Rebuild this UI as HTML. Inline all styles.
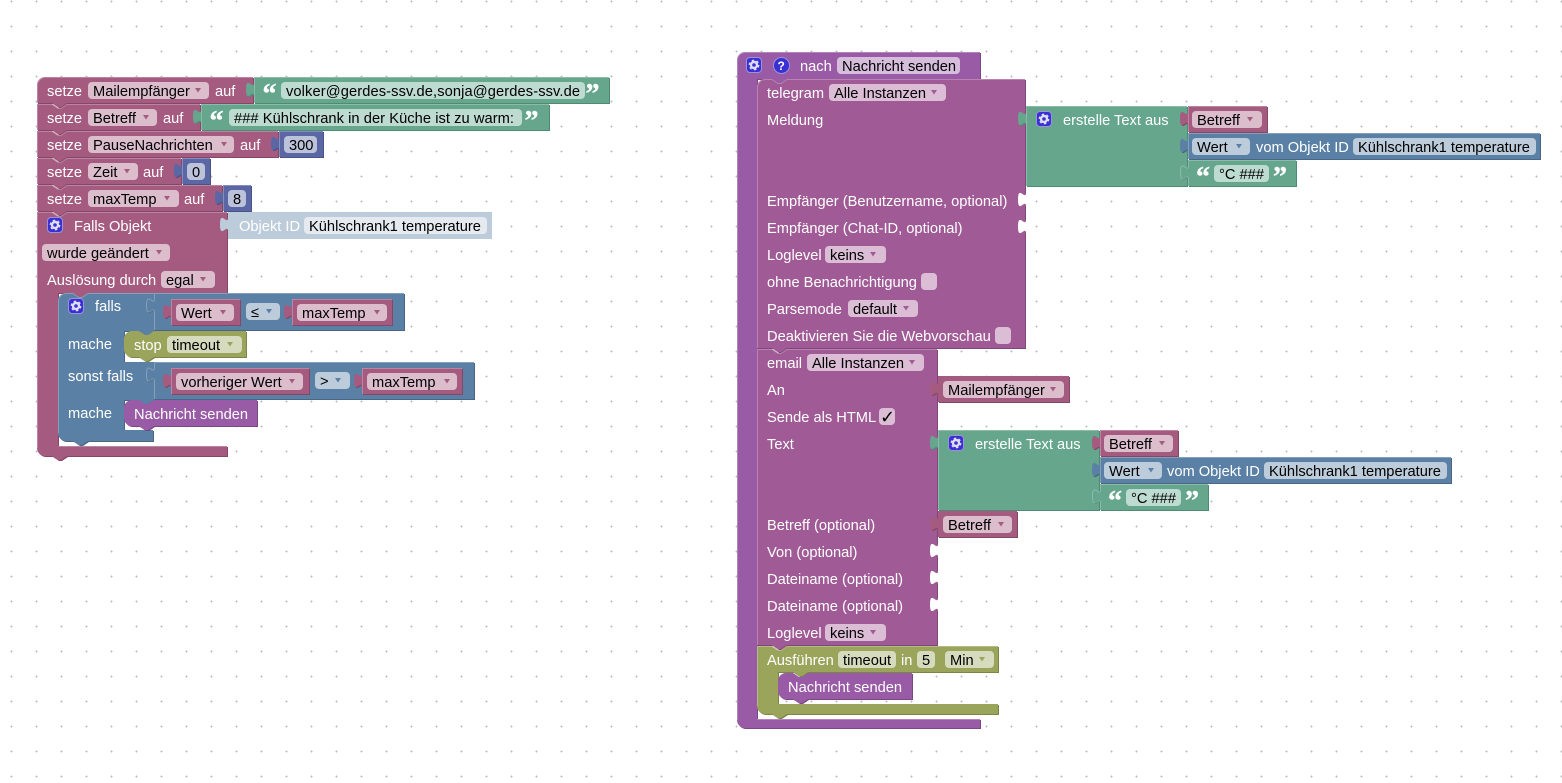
<!DOCTYPE html>
<html><head><meta charset="utf-8"><title>Blockly</title>
<style>
html,body{margin:0;padding:0;background:#fff;width:1562px;height:783px;overflow:hidden}
svg{display:block;position:absolute;left:0;top:0}
text{font-family:"Liberation Sans",sans-serif;font-size:14.67px;fill:#fff;white-space:pre}
text.k{fill:#000}
text.q{font-family:"Liberation Serif",serif;font-weight:bold;font-size:28px;stroke:#fff;stroke-width:.4}
.mv{fill:#A55B80;filter:drop-shadow(1px 1px 0 #844866)}
.gr{fill:#65A68D;filter:drop-shadow(1px 1px 0 #4F8A74)}
.bl{fill:#5B80A5;filter:drop-shadow(1px 1px 0 #496684)}
.ma{fill:#5B67A5;filter:drop-shadow(1px 1px 0 #495284)}
.ol{fill:#9AA55B;filter:drop-shadow(1px 1px 0 #7B8449)}
.pu{fill:#995BA5;filter:drop-shadow(1px 1px 0 #7A4984)}
.tg{fill:#A05A96;filter:drop-shadow(1px 1px 0 #804878)}
.ob{fill:#BDCCDB}
.fm{fill:#DBBDCC}.fg{fill:#BDDBD1}.fb{fill:#BDCCDB}.fa{fill:#BDC2DB}.fo{fill:#D6DBBD}.fp{fill:#D6BDDB}.ft{fill:#DBBDD6}.fi{fill:#E4EAF0}
.h{fill:none;stroke:#fff;stroke-opacity:.25;stroke-width:1}
.w{fill:#fff}
</style></head><body>
<svg width="1562" height="783" viewBox="0 0 1562 783" xmlns="http://www.w3.org/2000/svg">
<defs>
<pattern id="dots" x="0" y="0" width="25" height="25" patternUnits="userSpaceOnUse">
<rect x="10" y="1" width="3" height="1" fill="#dcdcdc"/>
<rect x="11" y="0" width="1" height="3" fill="#dcdcdc"/>
<rect x="11" y="1" width="1" height="1" fill="#bbb"/>
</pattern>
<path id="a" d="M-3 0h6l-3 4.500z"/>
<g id="g">
<rect x=".5" y=".5" width="15" height="15" rx="3.500" fill="#3A2FD2" stroke="#9A93D8"/>
<circle cx="8" cy="8" r="3" fill="none" stroke="#DDDDF5" stroke-width="2.400"/>
<circle cx="8" cy="8" r="4.600" fill="none" stroke="#DDDDF5" stroke-width="1.600" stroke-dasharray="2.400 2.420"/>
</g>
</defs>
<rect width="1562" height="783" fill="url(#dots)"/>

<!-- LEFT STACK -->
<path class="mv" d="M45 77H253V103H67l-6 4h-3l-6-4H37V85a8 8 0 0 1 8-8Z"/>
<path class="gr" d="M254 77H609V103H254V97c0-10-8 8-8-7.500s8 2.500 8-7.500Z"/>
<path class="mv" d="M37 104H52l6 4h3l6-4H200V130H67l-6 4h-3l-6-4H37Z"/>
<path class="gr" d="M201 104H549V130H201V124c0-10-8 8-8-7.500s8 2.500 8-7.500Z"/>
<path class="mv" d="M37 131H52l6 4h3l6-4H278V157H67l-6 4h-3l-6-4H37Z"/>
<path class="ma" d="M279 131H323V157H279V151c0-10-8 8-8-7.500s8 2.500 8-7.500Z"/>
<path class="mv" d="M37 158H52l6 4h3l6-4H181V184H67l-6 4h-3l-6-4H37Z"/>
<path class="ma" d="M182 158H210V184H182V178c0-10-8 8-8-7.500s8 2.500 8-7.500Z"/>
<path class="mv" d="M37 185H52l6 4h3l6-4H222V211H67l-6 4h-3l-6-4H37Z"/>
<path class="ma" d="M223 185H251V211H223V205c0-10-8 8-8-7.500s8 2.500 8-7.500Z"/>
<path class="mv" d="M37 212H52l6 4h3l6-4H227V293H88l-6 4h-3l-6-4H58V446H227V456H67l-6 4h-3l-6-4H45a8 8 0 0 1-8-8Z"/>
<path class="ob" d="M228 212H492V239H228V232c0-10-8 8-8-7.500s8 2.500 8-7.500Z"/>
<path class="h" d="M37.500 103V85a8 8 0 0 1 8-7.500H253M37.500 130V104.500H52l6 4h3l6-4H200M37.500 157V131.500H52l6 4h3l6-4H278M37.500 184V158.500H52l6 4h3l6-4H181M37.500 211V185.500H52l6 4h3l6-4H222M37.500 448V212.500H52l6 4h3l6-4H227M58.500 446.500H227"/>
<path class="h" d="M254.500 103V77.500H609M201.500 130V104.500H549M279.500 157V131.500H323M182.500 184V158.500H210M223.500 211V185.500H251"/>

<text x="47" y="96">setze</text>
<rect class="fm" x="88" y="82" width="121" height="17" rx="4"/><text class="k" x="93" y="96">Mailempfänger</text><use href="#a" x="198" y="88" fill="#A55B80"/>
<text x="215" y="96">auf</text>
<text class="q" x="262.500" y="103">“</text>
<rect class="fg" x="281" y="82" width="304" height="17" rx="4"/><text class="k" x="286" y="96" textLength="294" lengthAdjust="spacing">volker@gerdes-ssv.de,sonja@gerdes-ssv.de</text>
<text class="q" x="585.500" y="103">”</text>

<text x="47" y="123">setze</text>
<rect class="fm" x="88" y="109" width="69" height="17" rx="4"/><text class="k" x="93" y="123">Betreff</text><use href="#a" x="146" y="115" fill="#A55B80"/>
<text x="163" y="123">auf</text>
<text class="q" x="209.500" y="130">“</text>
<rect class="fg" x="229" y="109" width="293" height="17" rx="4"/><text class="k" x="234" y="123" textLength="280" lengthAdjust="spacing">### Kühlschrank in der Küche ist zu warm:</text>
<text class="q" x="524.500" y="130">”</text>

<text x="47" y="150">setze</text>
<rect class="fm" x="88" y="136" width="146" height="17" rx="4"/><text class="k" x="93" y="150">PauseNachrichten</text><use href="#a" x="224" y="142" fill="#A55B80"/>
<text x="240" y="150">auf</text>
<rect class="fa" x="284" y="136" width="33" height="17" rx="4"/><text class="k" x="289" y="150">300</text>

<text x="47" y="177">setze</text>
<rect class="fm" x="88" y="163" width="50" height="17" rx="4"/><text class="k" x="93" y="177">Zeit</text><use href="#a" x="127" y="169" fill="#A55B80"/>
<text x="143" y="177">auf</text>
<rect class="fa" x="187" y="163" width="18" height="17" rx="4"/><text class="k" x="192" y="177">0</text>

<text x="47" y="204">setze</text>
<rect class="fm" x="88" y="190" width="91" height="17" rx="4"/><text class="k" x="93" y="204">maxTemp</text><use href="#a" x="167" y="196" fill="#A55B80"/>
<text x="184" y="204">auf</text>
<rect class="fa" x="228" y="190" width="18" height="17" rx="4"/><text class="k" x="233" y="204">8</text>

<use href="#g" x="47" y="217"/>
<text x="74" y="231">Falls Objekt</text>
<text x="239" y="231">Objekt ID</text>
<rect class="fi" x="304" y="217" width="183" height="17" rx="4"/><text class="k" x="309" y="231">Kühlschrank1 temperature</text>

<rect class="fm" x="42" y="244" width="128" height="17" rx="4"/><text class="k" x="47" y="258">wurde geändert</text><use href="#a" x="159" y="250" fill="#A55B80"/>
<text x="47" y="285">Auslösung durch</text>
<rect class="fm" x="161" y="271" width="54" height="17" rx="4"/><text class="k" x="166" y="285">egal</text><use href="#a" x="203" y="277" fill="#A55B80"/>

<!-- falls -->
<path class="bl" d="M66 293H73l6 4h3l6-4H154V331l-6 4h-3l-6-4H124V362H154V400l-6 4h-3l-6-4H124V430H153V441H88l-6 4h-3l-6-4H66a8 8 0 0 1-8-8V301a8 8 0 0 1 8-8Z"/>
<path class="bl" d="M154 293H404V330H154V313c0-10-8 8-8-7.500s8 2.500 8-7.500Z"/>
<path class="mv" d="M171 299H240V325H171V319c0-10-8 8-8-7.500s8 2.500 8-7.500Z"/>
<path class="mv" d="M292 299H392V325H292V319c0-10-8 8-8-7.500s8 2.500 8-7.500Z"/>
<path class="bl" d="M154 362H474V399H154V382c0-10-8 8-8-7.500s8 2.500 8-7.500Z"/>
<path class="mv" d="M171 368H309V394H171V388c0-10-8 8-8-7.500s8 2.500 8-7.500Z"/>
<path class="mv" d="M362 368H462V394H362V388c0-10-8 8-8-7.500s8 2.500 8-7.500Z"/>
<path class="h" d="M154.500 313c0-10-8 8-8-7.500s8 2.500 8-7.500V293M154.500 330V313M154.500 382c0-10-8 8-8-7.500s8 2.500 8-7.500V362M154.500 399V382M154 293.500H404M154 362.500H474M58.500 433V301a8 8 0 0 1 8-7.500H73l6 4h3l6-4H154"/>
<path class="h" d="M171.500 325V299.500H240M292.500 325V299.500H392M171.500 394V368.500H309M362.500 394V368.500H462"/>
<use href="#g" x="68" y="298"/>
<text x="95" y="311">falls</text>
<text x="68" y="349">mache</text>
<text x="68" y="381">sonst falls</text>
<text x="68" y="418">mache</text>
<rect class="fm" x="176" y="304" width="58" height="17" rx="4"/><text class="k" x="181" y="318">Wert</text><use href="#a" x="223" y="310" fill="#A55B80"/>
<rect class="fb" x="246" y="303" width="34" height="17" rx="4"/><text class="k" x="251" y="317">≤</text><use href="#a" x="269" y="309" fill="#5B80A5"/>
<rect class="fm" x="297" y="304" width="90" height="17" rx="4"/><text class="k" x="302" y="318">maxTemp</text><use href="#a" x="377" y="310" fill="#A55B80"/>
<rect class="fm" x="176" y="373" width="127" height="17" rx="4"/><text class="k" x="181" y="387">vorheriger Wert</text><use href="#a" x="292" y="379" fill="#A55B80"/>
<rect class="fb" x="315" y="372" width="35" height="17" rx="4"/><text class="k" x="320" y="386">&gt;</text><use href="#a" x="338" y="378" fill="#5B80A5"/>
<rect class="fm" x="367" y="373" width="90" height="17" rx="4"/><text class="k" x="372" y="387">maxTemp</text><use href="#a" x="447" y="379" fill="#A55B80"/>

<path class="ol" d="M132 331H139l6 4h3l6-4H246V357H154l-6 4h-3l-6-4H132a8 8 0 0 1-8-8V339a8 8 0 0 1 8-8Z"/>
<text x="134" y="350">stop</text>
<rect class="fo" x="167" y="336" width="75" height="17" rx="4"/><text class="k" x="172" y="350">timeout</text><use href="#a" x="230" y="342" fill="#9AA55B"/>
<path class="pu" d="M132 400H139l6 4h3l6-4H257V426H154l-6 4h-3l-6-4H132a8 8 0 0 1-8-8V408a8 8 0 0 1 8-8Z"/>
<text x="134" y="419">Nachricht senden</text>

<!-- RIGHT: procedure -->
<path class="pu" d="M745 52H980V79H787l-6 4h-3l-6-4H757V719H980V728H745a8 8 0 0 1-8-8V60a8 8 0 0 1 8-8Z"/>
<path class="h" d="M737.500 720V60a8 8 0 0 1 8-7.500H980M757 719.500H980"/>
<use href="#g" x="746" y="57"/>
<circle cx="781.500" cy="65.500" r="8" fill="#3A2FD2" stroke="#9A93D8"/>
<text x="777.500" y="70" style="font-weight:bold;font-size:12px">?</text>
<text x="800" y="71">nach</text>
<rect class="fp" x="837" y="57" width="123" height="17" rx="4"/><text class="k" x="842" y="71">Nachricht senden</text>

<!-- telegram -->
<path class="tg" d="M757 87a8 8 0 0 1 8-8H772l6 4h3l6-4H1025V348H787l-6 4h-3l-6-4H757Z"/>
<path class="h" d="M757.500 348V87a8 8 0 0 1 8-7.500H772l6 4h3l6-4H1025"/>
<text x="767" y="98">telegram</text>
<rect class="ft" x="829" y="84" width="117" height="17" rx="4"/><text class="k" x="834" y="98">Alle Instanzen</text><use href="#a" x="934" y="90" fill="#A05A96"/>
<text x="767" y="125">Meldung</text>
<text x="767" y="206">Empfänger (Benutzername, optional)</text>
<path class="w" d="M1026 207c0-10-8 8-8-7.500s8 2.500 8-7.500Z"/>
<text x="767" y="233">Empfänger (Chat-ID, optional)</text>
<path class="w" d="M1026 234c0-10-8 8-8-7.500s8 2.500 8-7.500Z"/>
<text x="767" y="260">Loglevel</text>
<rect class="ft" x="825" y="246" width="61" height="17" rx="4"/><text class="k" x="830" y="260">keins</text><use href="#a" x="873" y="252" fill="#A05A96"/>
<text x="767" y="287">ohne Benachrichtigung</text>
<rect class="ft" x="921" y="273" width="16" height="17" rx="4"/>
<text x="767" y="314">Parsemode</text>
<rect class="ft" x="848" y="300" width="70" height="17" rx="4"/><text class="k" x="853" y="314">default</text><use href="#a" x="906" y="306" fill="#A05A96"/>
<text x="767" y="341">Deaktivieren Sie die Webvorschau</text>
<rect class="ft" x="995" y="327" width="16" height="17" rx="4"/>

<path class="gr" d="M1026 106H1187V186H1026V126c0-10-8 8-8-7.500s8 2.500 8-7.500Z"/>
<path class="h" d="M1026.500 186V106.500H1187"/>
<use href="#g" x="1036" y="111"/>
<text x="1063" y="125">erstelle Text aus</text>
<path class="mv" d="M1188 106H1267V132H1188V126c0-10-8 8-8-7.500s8 2.500 8-7.500Z"/>
<rect class="fm" x="1192" y="111" width="70" height="17" rx="4"/><text class="k" x="1197" y="125">Betreff</text><use href="#a" x="1250" y="117" fill="#A55B80"/>
<path class="bl" d="M1188 133H1540V159H1188V153c0-10-8 8-8-7.500s8 2.500 8-7.500Z"/>
<rect class="fb" x="1192" y="138" width="58" height="17" rx="4"/><text class="k" x="1197" y="152">Wert</text><use href="#a" x="1239" y="144" fill="#5B80A5"/>
<text x="1256" y="152">vom Objekt ID</text>
<rect class="fb" x="1353" y="138" width="183" height="17" rx="4"/><text class="k" x="1358" y="152">Kühlschrank1 temperature</text>
<path class="gr" d="M1188 160H1296V186H1188V180c0-10-8 8-8-7.500s8 2.500 8-7.500Z"/>
<path class="h" d="M1188.500 180c0-10-8 8-8-7.500s8 2.500 8-7.500V160.500H1296M1188.500 186V180M1188.500 132V106.500H1267M1188.500 159V133.500H1540"/>
<text class="q" x="1196" y="186">“</text>
<rect class="fg" x="1214" y="165" width="55" height="17" rx="4"/><text class="k" x="1219" y="179">°C ###</text>
<text class="q" x="1273" y="186">”</text>

<!-- email -->
<path class="tg" d="M757 349H772l6 4h3l6-4H937V645H787l-6 4h-3l-6-4H757Z"/>
<path class="h" d="M757.500 645V349.500H772l6 4h3l6-4H937"/>
<text x="767" y="368">email</text>
<rect class="ft" x="807" y="354" width="117" height="17" rx="4"/><text class="k" x="812" y="368">Alle Instanzen</text><use href="#a" x="912" y="360" fill="#A05A96"/>
<text x="767" y="395">An</text>
<path class="mv" d="M938 376H1069V402H938V396c0-10-8 8-8-7.500s8 2.500 8-7.500Z"/>
<rect class="fm" x="943" y="381" width="121" height="17" rx="4"/><text class="k" x="948" y="395">Mailempfänger</text><use href="#a" x="1053" y="387" fill="#A55B80"/>
<text x="767" y="422">Sende als HTML</text>
<rect class="ft" x="879" y="408" width="16" height="17" rx="4"/><text class="k" x="880" y="423" style="font-family:'DejaVu Sans',sans-serif;font-size:18px">✓</text>
<text x="767" y="449">Text</text>
<path class="gr" d="M938 430H1099V510H938V450c0-10-8 8-8-7.500s8 2.500 8-7.500Z"/>
<path class="h" d="M938.500 510V430.500H1099"/>
<use href="#g" x="948" y="435"/>
<text x="975" y="449">erstelle Text aus</text>
<path class="mv" d="M1100 430H1178V456H1100V450c0-10-8 8-8-7.500s8 2.500 8-7.500Z"/>
<rect class="fm" x="1104" y="435" width="69" height="17" rx="4"/><text class="k" x="1109" y="449">Betreff</text><use href="#a" x="1162" y="441" fill="#A55B80"/>
<path class="bl" d="M1100 457H1451V483H1100V477c0-10-8 8-8-7.500s8 2.500 8-7.500Z"/>
<rect class="fb" x="1104" y="462" width="58" height="17" rx="4"/><text class="k" x="1109" y="476">Wert</text><use href="#a" x="1151" y="468" fill="#5B80A5"/>
<text x="1167" y="476">vom Objekt ID</text>
<rect class="fb" x="1264" y="462" width="183" height="17" rx="4"/><text class="k" x="1269" y="476">Kühlschrank1 temperature</text>
<path class="gr" d="M1100 484H1208V510H1100V504c0-10-8 8-8-7.500s8 2.500 8-7.500Z"/>
<path class="h" d="M1100.500 504c0-10-8 8-8-7.500s8 2.500 8-7.500V484.500H1208M1100.500 510V504M1100.500 456V430.500H1178M1100.500 483V457.500H1451"/>
<text class="q" x="1108" y="510">“</text>
<rect class="fg" x="1126" y="489" width="55" height="17" rx="4"/><text class="k" x="1131" y="503">°C ###</text>
<text class="q" x="1185" y="510">”</text>
<text x="767" y="530">Betreff (optional)</text>
<path class="mv" d="M938 511H1017V537H938V531c0-10-8 8-8-7.500s8 2.500 8-7.500Z"/>
<rect class="fm" x="943" y="516" width="69" height="17" rx="4"/><text class="k" x="948" y="530">Betreff</text><use href="#a" x="1001" y="522" fill="#A55B80"/>
<text x="767" y="557">Von (optional)</text>
<path class="w" d="M938 558c0-10-8 8-8-7.500s8 2.500 8-7.500Z"/>
<text x="767" y="584">Dateiname (optional)</text>
<path class="w" d="M938 585c0-10-8 8-8-7.500s8 2.500 8-7.500Z"/>
<text x="767" y="611">Dateiname (optional)</text>
<path class="w" d="M938 612c0-10-8 8-8-7.500s8 2.500 8-7.500Z"/>
<text x="767" y="638">Loglevel</text>
<rect class="ft" x="825" y="624" width="61" height="17" rx="4"/><text class="k" x="830" y="638">keins</text><use href="#a" x="873" y="630" fill="#A05A96"/>

<!-- timeout -->
<path class="ol" d="M757 646H772l6 4h3l6-4H998V672H808l-6 4h-3l-6-4H778V704H998V714H787l-6 4h-3l-6-4H765a8 8 0 0 1-8-8Z"/>
<path class="h" d="M757.500 706V646.500H772l6 4h3l6-4H998"/>
<text x="767" y="665">Ausführen</text>
<rect class="fo" x="838" y="651" width="58" height="17" rx="4"/><text class="k" x="843" y="665">timeout</text>
<text x="901" y="665">in</text>
<rect class="fo" x="917" y="651" width="18" height="17" rx="4"/><text class="k" x="922" y="665">5</text>
<rect class="fo" x="945" y="651" width="49" height="17" rx="4"/><text class="k" x="950" y="665">Min</text><use href="#a" x="982" y="657" fill="#9AA55B"/>
<path class="pu" d="M786 673H793l6 4h3l6-4H912V699H808l-6 4h-3l-6-4H786a8 8 0 0 1-8-8V681a8 8 0 0 1 8-8Z"/>
<text x="788" y="692">Nachricht senden</text>
</svg>
</body></html>
